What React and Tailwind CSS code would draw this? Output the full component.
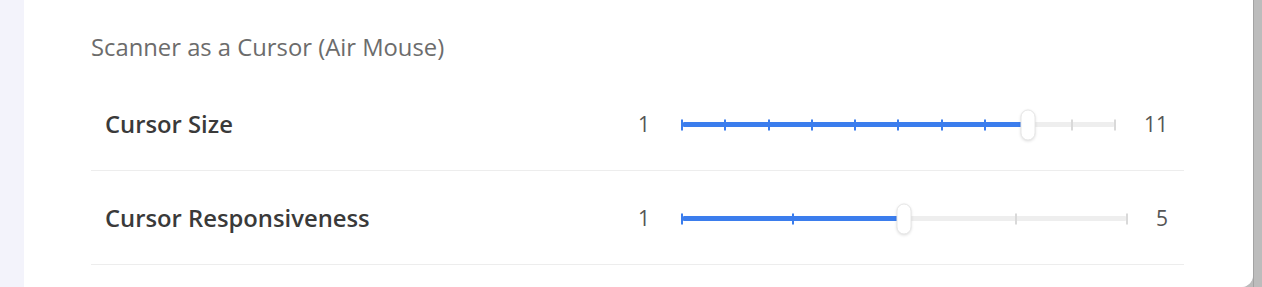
import React from "react";

const font = { fontFamily: '"Open Sans", "Noto Sans", sans-serif' };

function Slider({ min, max, value }) {
  const steps = max - min;
  const pct = ((value - min) / steps) * 100;
  const ticks = Array.from({ length: steps + 1 }, (_, i) => i);

  return (
    <div className="flex w-[530px] items-center text-[21px] text-[#555]">
      <span className="w-[12px] text-right leading-none">{min}</span>
      <div className="relative ml-[32px] mr-[29px] h-[5px] flex-1 rounded-full bg-[#eeeeee]">
        <div
          className="absolute left-0 top-0 h-full rounded-l-full bg-[#3b7ded]"
          style={{ width: `${pct}%` }}
        />
        {ticks.map((i) => {
          const left = (i / steps) * 100;
          return (
            <div
              key={i}
              className={
                left <= pct
                  ? "absolute top-1/2 h-[11px] w-[2px] -translate-x-1/2 -translate-y-1/2 bg-[#3b7ded]"
                  : "absolute top-1/2 h-[11px] w-[2px] -translate-x-1/2 -translate-y-1/2 bg-[#d9d9d9]"
              }
              style={{ left: `${left}%` }}
            />
          );
        })}
        <div
          className="absolute top-1/2 h-[31px] w-[15px] -translate-x-1/2 -translate-y-1/2 rounded-full border border-[#e6e6e6] bg-white shadow-[0_1px_3px_rgba(0,0,0,0.12)]"
          style={{ left: `${pct}%` }}
        />
      </div>
      <span className="leading-none">{max}</span>
    </div>
  );
}

function Row({ label, min, max, value }) {
  return (
    <div className="flex h-[94px] items-center border-b border-[#ededed] pl-[14px] pr-[16px] pt-[2px]">
      <div className="flex-1 text-[23.8px] font-semibold text-[#3a3a3a]">{label}</div>
      <Slider min={min} max={max} value={value} />
    </div>
  );
}

export default function App() {
  return (
    <div className="flex h-[287px] w-[1262px] overflow-hidden bg-[#bcbcbc]" style={font}>
      <div className="flex flex-1 overflow-hidden rounded-br-[12px] bg-[#f3f3fb]">
        <div className="w-6 shrink-0" />
        <div className="flex-1 bg-white pl-[67px] pr-[69px]">
          <div className="pt-[31px] text-[23.8px] leading-8 text-[#6c6c6c]">
            Scanner as a Cursor (Air Mouse)
          </div>
          <div className="mt-[14px]">
            <Row label="Cursor Size" min={1} max={11} value={9} />
            <Row label="Cursor Responsiveness" min={1} max={5} value={3} />
          </div>
        </div>
      </div>
      <div className="w-[9px] shrink-0 border-l border-[#a3a3a3] bg-[#bcbcbc]" />
    </div>
  );
}
